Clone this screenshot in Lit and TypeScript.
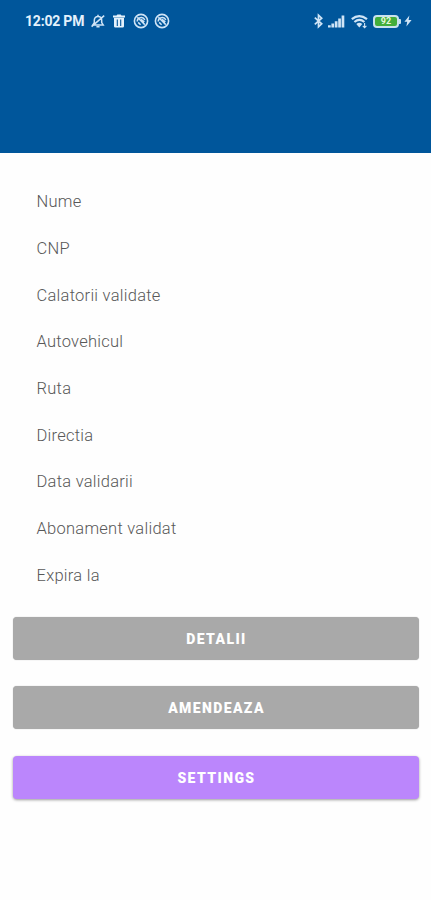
import { LitElement, html, css, svg } from "lit";
import { customElement, property } from "lit/decorators.js";

const LABELS = [
  "Nume", "CNP", "Calatorii validate", "Autovehicul", "Ruta",
  "Directia", "Data validarii", "Abonament validat", "Expira la",
];

const blocked = svg`
  <circle cx="8" cy="8" r="6.6" fill="none" stroke="currentColor" stroke-width="1.6"/>
  <path d="M4.2 8.6a4 4 0 0 1 7.6-1.8M4.4 4.2l7.4 7.4M5.2 9.4l2.4 2.4M8 6.4l3.4 2.4" fill="none" stroke="currentColor" stroke-width="1.5"/>`;

@customElement("status-bar")
export class StatusBar extends LitElement {
  static styles = css`
    :host { display: flex; align-items: center; height: 42px; padding: 0 19px 0 25px; color: #cfe4f6; }
    .time { font-size: 14px; letter-spacing: -.2px; line-height: 16px; font-weight: 700; width: 65px; white-space: nowrap; color: #e4f1fc; }
    svg { display: block; flex: none; overflow: visible; }
    .left, .right { display: flex; align-items: center; }
    .left { gap: 5.5px; margin-left: -.5px; }
    .right { margin-left: auto; }
    .signal { margin-left: 5px; }
    .wifi { margin-left: 6px; }
    .battery { margin-left: 5.5px; display: flex; align-items: center; }
    .cell {
      box-sizing: border-box; width: 26px; height: 13px; border: 2px solid #c9e2ee; border-radius: 4px;
      background: #42ad3b; color: #e6f8dc; font-size: 9px; line-height: 9.5px; font-weight: 700; text-align: center;
    }
    .cap { width: 2px; height: 5px; background: #c9e2ee; border-radius: 0 1px 1px 0; }
    .bolt { margin-left: 3px; }
  `;
  render() {
    return html`
      <span class="time">12:02 PM</span>
      <div class="left">
        <svg width="16" height="16" viewBox="0 0 16 16" fill="none" stroke="currentColor" stroke-width="1.5">
          <path d="M2.8 11.9 4.3 9.6V7.2C4.3 4.9 5.8 3.4 8 3.4s3.7 1.5 3.7 3.8v2.4l1.5 2.3zM8 1.8v1.6M6.4 13.8h3.2M1.6 13.6 14.2 2.6"/>
        </svg>
        <svg width="16" height="16" viewBox="0 0 16 16" color="#e4f1fc">
          <path d="M2 2.6h3.5L6.4 1.4h3.2l.9 1.2H14v1.8H2z" fill="currentColor"/>
          <path d="M3 4.8h10v8.4q0 1.4-1.4 1.4H4.4Q3 14.6 3 13.2z" fill="currentColor"/>
          <path d="M6.3 6.6V13M9.7 6.6V13" stroke="#00569b" stroke-width="1.1"/>
        </svg>
        <svg width="16" height="16" viewBox="0 0 16 16">${blocked}</svg>
        <svg width="16" height="16" viewBox="0 0 16 16">${blocked}</svg>
      </div>
      <div class="right">
        <svg width="9" height="14" viewBox="0 0 9 14" fill="none" stroke="currentColor" stroke-width="1.7">
          <path d="M.8 3.6 7.7 9.8 4.5 12.8V1.2L7.7 4.2.8 10.4"/>
        </svg>
        <svg class="signal" width="17" height="13" viewBox="0 0 17 13" fill="currentColor">
          <path d="M0 10.2h2.7v2.3H0zM3.4 8.4h2.7v4.1H3.4zM6.8 6.2h2.7v6.3H6.8zM10.2 3.6h2.7v8.9h-2.7zM13.6 .6h2.7v11.9h-2.7z"/>
        </svg>
        <svg class="wifi" width="17" height="13" viewBox="0 0 17 13" fill="none" stroke="currentColor">
          <path d="M.8 4.2Q8.2-2 16 4.2M3.4 7q5-4.1 10 0" stroke-width="2.2"/>
          <path d="M5.3 9q3-2.4 6 0L8.3 12.5z" fill="currentColor" stroke="none"/>
          <path d="M13.6 8v4.5M11.8 10.8l1.8 1.8 1.8-1.8" stroke-width="1.1"/>
        </svg>
        <div class="battery"><div class="cell">92</div><div class="cap"></div></div>
        <svg class="bolt" width="8" height="12" viewBox="0 0 8 12" fill="currentColor">
          <path d="M5.4.6.4 6.7h2.8l-.8 4.7L7.6 5H4.6z"/>
        </svg>
      </div>`;
  }
}

@customElement("action-button")
export class ActionButton extends LitElement {
  @property() label = "";
  @property({ type: Boolean, reflect: true }) primary = false;
  static styles = css`
    :host { display: block; }
    .button {
      display: block; width: 100%; height: 43px; padding: 1px 0 0 1.5px; border: 0; border-radius: 4px;
      background: #a9a9a9; color: #fff; font: 900 14px/42px Roboto, sans-serif;
      letter-spacing: 1.4px; text-align: center; box-shadow: 0 0 1px #aaa;
    }
    :host([primary]) .button { background: #bb86fc; box-shadow: 0 1px 3px rgba(0, 0, 0, .4); }
  `;
  render() {
    return html`<button class="button">${this.label}</button>`;
  }
}

@customElement("app-root")
export class AppRoot extends LitElement {
  static styles = css`
    :host { display: block; height: 900px; overflow: hidden; background: #fefefe; font-family: Roboto, sans-serif; }
    .header { height: 153px; background: #00569b; }
    .fields { list-style: none; margin: 0; padding: 26.3px 36.5px 0; }
    .field { height: 46.67px; line-height: 46.67px; font-size: 16.5px; font-weight: 300; color: #585858; letter-spacing: .26px; }
    .actions { display: flex; flex-direction: column; gap: 26.5px; padding: 17.5px 12px 0 12.5px; }
  `;
  render() {
    return html`
      <header class="header"><status-bar></status-bar></header>
      <ul class="fields">${LABELS.map((l) => html`<li class="field">${l}</li>`)}</ul>
      <div class="actions">
        <action-button label="DETALII"></action-button>
        <action-button label="AMENDEAZA"></action-button>
        <action-button label="SETTINGS" primary></action-button>
      </div>`;
  }
}
